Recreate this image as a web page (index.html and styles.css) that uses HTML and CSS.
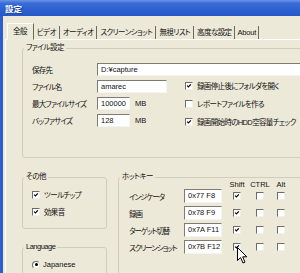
FILE: index.html
```html
<!DOCTYPE html>
<html lang="ja">
<head>
  <meta charset="UTF-8">
  <title>設定</title>
  <link rel="stylesheet" href="styles.css">
</head>
<body>
  <div class="window">
    <div class="titlebar"><span class="title">設定</span></div>
    <div class="frame">
      <div class="tabs">
        <div class="tab active">全般</div>
        <div class="tab">ビデオ</div>
        <div class="tab">オーディオ</div>
        <div class="tab">スクリーンショット</div>
        <div class="tab">無視リスト</div>
        <div class="tab">高度な設定</div>
        <div class="tab latin">About</div>
      </div>
      <div class="panel">
        <fieldset class="group file">
          <legend>ファイル設定</legend>
          <div class="inner">
            <div class="row">
              <span class="lbl">保存先</span>
              <span class="field wide">D:¥capture</span>
            </div>
            <div class="split">
              <div class="fields">
                <div class="row">
                  <span class="lbl">ファイル名</span>
                  <span class="field name">amarec</span>
                </div>
                <div class="row">
                  <span class="lbl">最大ファイルサイズ</span>
                  <span class="field size">100000</span>
                  <span class="unit">MB</span>
                </div>
                <div class="row">
                  <span class="lbl">バッファサイズ</span>
                  <span class="field size">128</span>
                  <span class="unit">MB</span>
                </div>
              </div>
              <div class="checks">
                <div class="opt"><span class="check on"><svg viewBox="0 0 8 8"><path d="M1.5 3.5 3.2 5.3 6.5 1.8"/></svg></span>録画停止後にフォルダを開く</div>
                <div class="opt"><span class="check"></span>レポートファイルを作る</div>
                <div class="opt"><span class="check on"><svg viewBox="0 0 8 8"><path d="M1.5 3.5 3.2 5.3 6.5 1.8"/></svg></span>録画開始時のHDD空容量チェック</div>
              </div>
            </div>
          </div>
        </fieldset>

        <div class="lower">
          <div class="left-col">
            <fieldset class="group misc">
              <legend>その他</legend>
              <div class="inner">
                <div class="opt"><span class="check on"><svg viewBox="0 0 8 8"><path d="M1.5 3.5 3.2 5.3 6.5 1.8"/></svg></span>ツールチップ</div>
                <div class="opt"><span class="check on"><svg viewBox="0 0 8 8"><path d="M1.5 3.5 3.2 5.3 6.5 1.8"/></svg></span>効果音</div>
              </div>
            </fieldset>
            <fieldset class="group lang">
              <legend>Language</legend>
              <div class="inner">
                <div class="opt"><span class="radio on"></span>Japanese</div>
              </div>
            </fieldset>
          </div>

          <fieldset class="group hotkey">
            <legend>ホットキー</legend>
            <div class="inner">
              <div class="keys head">
                <span></span><span></span>
                <span class="col">Shift</span>
                <span class="col">CTRL</span>
                <span class="col">Alt</span>
              </div>
              <div class="keys">
                <span class="lbl">インジケータ</span>
                <span class="field key">0x77 F8</span>
                <span class="col"><span class="check on"><svg viewBox="0 0 8 8"><path d="M1.5 3.5 3.2 5.3 6.5 1.8"/></svg></span></span>
                <span class="col"><span class="check"></span></span>
                <span class="col"><span class="check"></span></span>

                <span class="lbl">録画</span>
                <span class="field key">0x78 F9</span>
                <span class="col"><span class="check on"><svg viewBox="0 0 8 8"><path d="M1.5 3.5 3.2 5.3 6.5 1.8"/></svg></span></span>
                <span class="col"><span class="check"></span></span>
                <span class="col"><span class="check"></span></span>

                <span class="lbl">ターゲット切替</span>
                <span class="field key">0x7A F11</span>
                <span class="col"><span class="check on"><svg viewBox="0 0 8 8"><path d="M1.5 3.5 3.2 5.3 6.5 1.8"/></svg></span></span>
                <span class="col"><span class="check"></span></span>
                <span class="col"><span class="check"></span></span>

                <span class="lbl">スクリーンショット</span>
                <span class="field key">0x7B F12</span>
                <span class="col"><span class="check on"><svg viewBox="0 0 8 8"><path d="M1.5 3.5 3.2 5.3 6.5 1.8"/></svg></span></span>
                <span class="col"><span class="check"></span></span>
                <span class="col"><span class="check"></span></span>
              </div>
            </div>
          </fieldset>
        </div>
      </div>
    </div>

    <!-- mouse pointer over the last Shift box -->
    <svg class="cursor" viewBox="0 0 11 17" width="11" height="17">
      <path d="M0.5 0.5 V13.5 L3.6 10.6 L6 16 L8 15.1 L5.7 9.8 H9.8 Z"/>
    </svg>
  </div>
</body>
</html>
```

FILE: styles.css
```css
* {
  box-sizing: border-box;
}

body {
  margin: 0;
  overflow: hidden;
  background: #ece9d8;
  font-family: "Liberation Sans", "Noto Sans CJK JP", sans-serif;
  font-size: 7.5px;
  font-feature-settings: "palt";
  color: #111;
}

.window {
  position: relative;
  width: 340px;
  height: 273px;
  display: flex;
  flex-direction: column;
  overflow: hidden;
}

.titlebar {
  height: 16px;
  flex-shrink: 0;
  display: flex;
  align-items: center;
  padding-left: 5px;
  background: linear-gradient(to bottom, #6b95e8 0%, #3a6cd8 20%, #2d60d0 60%, #2657c6 100%);
}

.title {
  color: #fff;
  font-weight: bold;
  font-size: 8.5px;
  text-shadow: 1px 1px 0 #173f9e;
}

.frame {
  flex: 1;
  display: flex;
  flex-direction: column;
  border-left: 3px solid #2c5ecf;
  background: #ece9d8;
  padding-top: 7px;
}

/* tab strip */
.tabs {
  display: flex;
  align-items: flex-end;
  height: 16px;
  padding-left: 4px;
  position: relative;
  z-index: 1;
  letter-spacing: -0.6px;
}

.tab {
  height: 13px;
  line-height: 13px;
  padding: 0 3px;
  border-right: 1px solid #6a6a62;
  white-space: nowrap;
}

.tab.latin {
  letter-spacing: -0.2px;
  padding: 0 2px;
}

.tab.active {
  height: 17px;
  margin-bottom: -1px;
  line-height: 15px;
  padding: 0 6px 0 5px;
  background: #ece9d8;
  border: 1px solid;
  border-color: #fff #6a6a62 transparent #fff;
}

.panel {
  flex: 1;
  margin-left: 2px;
  border-top: 1px solid #fff;
  border-left: 1px solid #fff;
  padding: 3px 0 0 16px;
  display: flex;
  flex-direction: column;
}

/* group boxes */
.group {
  margin: 0;
  padding: 0;
  min-width: 0;
  border: 1px solid #cfcdbd;
  border-radius: 3px;
}

.group legend {
  margin-left: 1px;
  padding: 0 2px;
  line-height: 10px;
  letter-spacing: -0.5px;
}

.file .inner {
  height: 104px;
  padding: 10px 0 0 9px;
  display: flex;
  flex-direction: column;
  gap: 4px;
}

.row {
  display: flex;
  align-items: center;
  height: 13px;
}

.lbl {
  width: 65px;
  flex-shrink: 0;
  letter-spacing: -0.8px;
  white-space: nowrap;
}

.field {
  display: block;
  height: 13px;
  line-height: 11px;
  padding-left: 3px;
  background: #fff;
  border: 1px solid;
  border-color: #7c7c74 #f4f4f0 #f4f4f0 #7c7c74;
  white-space: nowrap;
  overflow: hidden;
}

.field.wide {
  flex: 1;
}

.field.name {
  width: 70px;
}

.field.size {
  width: 33px;
}

.unit {
  margin-left: 5px;
}

.split {
  display: flex;
}

.fields {
  width: 153px;
  display: flex;
  flex-direction: column;
  gap: 4px;
}

.checks {
  display: flex;
  flex-direction: column;
  gap: 5px;
  margin-top: -1px;
}

.opt {
  display: flex;
  align-items: center;
  height: 13px;
  gap: 4px;
  letter-spacing: -0.65px;
  white-space: nowrap;
}

.check {
  width: 8px;
  height: 8px;
  flex-shrink: 0;
  display: inline-block;
  background: #fff;
  border: 1px solid;
  border-color: #6e6e66 #f0f0ea #f0f0ea #6e6e66;
}

.check svg {
  display: block;
  width: 6px;
  height: 6px;
}

.check path {
  fill: none;
  stroke: #000;
  stroke-width: 1.6;
}

.radio {
  width: 8px;
  height: 8px;
  flex-shrink: 0;
  border-radius: 50%;
  background: #fff;
  border: 1px solid;
  border-color: #6e6e66 #e8e8e0 #e8e8e0 #6e6e66;
  display: flex;
  align-items: center;
  justify-content: center;
}

.radio.on::after {
  content: "";
  width: 3px;
  height: 3px;
  border-radius: 50%;
  background: #000;
}

/* lower half */
.lower {
  flex: 1;
  display: flex;
  margin-top: 14px;
}

.left-col {
  width: 85px;
  display: flex;
  flex-direction: column;
  gap: 13px;
}

.misc .inner {
  height: 46px;
  padding: 6px 0 0 9px;
  display: flex;
  flex-direction: column;
  gap: 4px;
}

.lang .inner {
  height: 40px;
  padding: 6px 0 0 9px;
}

.lang .opt {
  gap: 3px;
  letter-spacing: 0;
}

.hotkey {
  flex: 1;
  margin-left: 11px;
}

.hotkey .inner {
  padding-left: 10px;
}

.keys {
  display: grid;
  grid-template-columns: 55px 38px 30px 16px 26px;
  grid-auto-rows: 14px;
  row-gap: 3px;
  align-items: center;
}

.keys .lbl {
  width: auto;
  letter-spacing: -1.1px;
}

.keys.head {
  grid-auto-rows: 8px;
  margin-top: -1px;
  line-height: 8px;
}

.keys .field {
  height: 14px;
  line-height: 12px;
}

.col {
  justify-self: center;
  display: flex;
  white-space: nowrap;
}

.cursor {
  position: absolute;
  left: 237px;
  top: 247px;
}

.cursor path {
  fill: #fff;
  stroke: #000;
  stroke-width: 1;
  stroke-linejoin: round;
}
```
